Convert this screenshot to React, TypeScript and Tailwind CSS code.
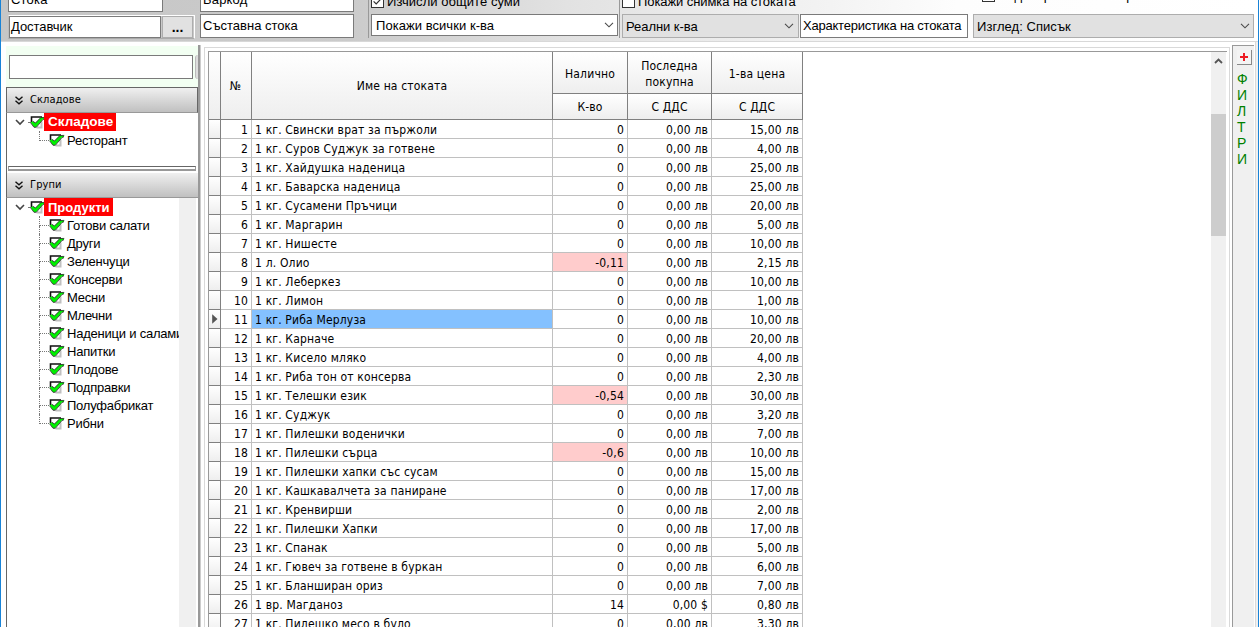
import type { ReactNode } from 'react';

type Row = [name: string, qty: string, last: string, price: string];

const rows: Row[] = [
  ['1 кг. Свински врат за пържоли', '0', '0,00 лв', '15,00 лв'],
  ['1 кг. Суров Суджук за готвене', '0', '0,00 лв', '4,00 лв'],
  ['1 кг. Хайдушка наденица', '0', '0,00 лв', '25,00 лв'],
  ['1 кг. Баварска наденица', '0', '0,00 лв', '25,00 лв'],
  ['1 кг. Сусамени Пръчици', '0', '0,00 лв', '20,00 лв'],
  ['1 кг. Маргарин', '0', '0,00 лв', '5,00 лв'],
  ['1 кг. Нишесте', '0', '0,00 лв', '10,00 лв'],
  ['1 л. Олио', '-0,11', '0,00 лв', '2,15 лв'],
  ['1 кг. Леберкез', '0', '0,00 лв', '10,00 лв'],
  ['1 кг. Лимон', '0', '0,00 лв', '1,00 лв'],
  ['1 кг. Риба Мерлуза', '0', '0,00 лв', '10,00 лв'],
  ['1 кг. Карначе', '0', '0,00 лв', '20,00 лв'],
  ['1 кг. Кисело мляко', '0', '0,00 лв', '4,00 лв'],
  ['1 кг. Риба тон от консерва', '0', '0,00 лв', '2,30 лв'],
  ['1 кг. Телешки език', '-0,54', '0,00 лв', '30,00 лв'],
  ['1 кг. Суджук', '0', '0,00 лв', '3,20 лв'],
  ['1 кг. Пилешки воденички', '0', '0,00 лв', '7,00 лв'],
  ['1 кг. Пилешки сърца', '-0,6', '0,00 лв', '10,00 лв'],
  ['1 кг. Пилешки хапки със сусам', '0', '0,00 лв', '15,00 лв'],
  ['1 кг. Кашкавалчета за паниране', '0', '0,00 лв', '17,00 лв'],
  ['1 кг. Кренвирши', '0', '0,00 лв', '2,00 лв'],
  ['1 кг. Пилешки Хапки', '0', '0,00 лв', '17,00 лв'],
  ['1 кг. Спанак', '0', '0,00 лв', '5,00 лв'],
  ['1 кг. Гювеч за готвене в буркан', '0', '0,00 лв', '6,00 лв'],
  ['1 кг. Бланширан ориз', '0', '0,00 лв', '7,00 лв'],
  ['1 вр. Магданоз', '14', '0,00 $', '0,80 лв'],
  ['1 кг. Пилешко месо в було', '0', '0,00 лв', '3,30 лв'],
];
const selected = 10;

const groups = [
  'Готови салати', 'Други', 'Зеленчуци', 'Консерви', 'Месни', 'Млечни',
  'Наденици и салами', 'Напитки', 'Плодове', 'Подправки', 'Полуфабрикат', 'Рибни',
];

const GRID = 'grid grid-cols-[12px_31px_301px_75px_84px_91px]';

function Chevron({ className = '' }: { className?: string }) {
  return (
    <svg width="10" height="6" viewBox="0 0 10 6" className={`shrink-0 ${className}`}>
      <path d="M1 0.8 L5 4.8 L9 0.8" fill="none" stroke="#4a4a4a" strokeWidth="1.1" />
    </svg>
  );
}

function Field({ className, children }: { className: string; children?: ReactNode }) {
  return (
    <div className={`flex shrink-0 items-center overflow-hidden whitespace-nowrap border border-[#7a7a7a] bg-white ${className}`}>
      {children}
    </div>
  );
}

function CheckBox({ checked = false }: { checked?: boolean }) {
  return (
    <svg width="13" height="13" viewBox="0 0 13 13" className="shrink-0">
      <rect x="0.5" y="0.5" width="12" height="12" fill="#fff" stroke="#333" />
      {checked && <path d="M2.6 6.4 L5.2 9 L10.4 3.4" fill="none" stroke="#333" strokeWidth="1.2" />}
    </svg>
  );
}

function TreeCheck() {
  return (
    <svg width="16" height="13" viewBox="0 0 16 13" className="shrink-0">
      <rect x="2" y="2" width="9" height="9" fill="#fff" />
      <path d="M6.5 11.5 H11.5 V5.5" fill="none" stroke="#c0c0c0" strokeWidth="2" />
      <path d="M1.5 6 V1 H12" fill="none" stroke="#111" strokeWidth="1.6" />
      <path d="M0.6 6.6 L2.8 5.2 L5.4 7 L10.8 1.6 L15.2 1.4 L15 2.7 L13 3.3 L6.2 11 L4 11 Z" fill="#00f000" />
      <path d="M2.8 5.2 L5.4 7 L10.8 1.6 L15.2 1.4 M15 2.7 L13 3.5 L6.3 11.3 L4 11.3 L0.6 6.8" fill="none" stroke="#222" strokeWidth="0.8" />
    </svg>
  );
}

function SectionHeader({ title, className }: { title: string; className: string }) {
  return (
    <div className={`flex shrink-0 items-center border-b border-l border-b-[#999] border-l-[#666] bg-linear-to-b from-[#f0f0f0] to-[#c0c0c0] pl-2 font-['DejaVu_Sans_Condensed',sans-serif] text-[11px] tracking-[0.1px] ${className}`}>
      <svg width="8" height="9" viewBox="0 0 8 9" className="mr-[7px]">
        <path d="M0.5 0.8 L4 3.8 L7.5 0.8 M0.5 4.8 L4 7.8 L7.5 4.8" fill="none" stroke="#111" strokeWidth="1.4" />
      </svg>
      <span className="pt-px">{title}</span>
    </div>
  );
}

function TreeRoot({ title, className }: { title: string; className: string }) {
  return (
    <div className="flex h-[18px] items-center pl-2">
      <svg width="10" height="7" viewBox="0 0 10 7" className="shrink-0">
        <path d="M1 1 L5 5 L9 1" fill="none" stroke="#444" strokeWidth="1.6" />
      </svg>
      <div className="ml-[3px] w-[2px] border-t border-dotted border-[#777]" />
      <TreeCheck />
      <div className={`-ml-[2px] flex h-[18px] items-center bg-[#f00] pl-1 pt-px font-bold text-white ${className}`}>{title}</div>
    </div>
  );
}

function TreeLeaf({ title, last }: { title: string; last: boolean }) {
  return (
    <div className="flex h-[18px] items-center overflow-hidden whitespace-nowrap pl-8">
      <div className="flex h-full w-[10px] shrink-0 flex-col">
        <div className="h-[10px] border-b border-l border-dotted border-[#777]" />
        {!last && <div className="h-2 border-l border-dotted border-[#777]" />}
      </div>
      <TreeCheck />
      <span className="ml-[2px] pt-[2px] tracking-[-0.22px]">{title}</span>
    </div>
  );
}

function Toolbar() {
  return (
    <div className="h-[42px] shrink-0 overflow-hidden border-b border-[#d8d8d8] bg-[linear-gradient(90deg,#c6c6c6_0%,#cbcbcb_28%,#e2e2e2_45%,#f3f3f3_66%,#fdfdfd_76%,#ffffff_100%)] pl-[7px]">
      <div className="flex h-[14px] overflow-hidden">
        <Field className="-mt-3 h-6 w-[155px] pl-[2px] tracking-[0.2px]">Стока</Field>
        <Field className="-mt-3 ml-[37px] h-6 w-[154px] pl-[2px] tracking-[0.2px]">Баркод</Field>
        <div className="ml-[14px] w-px bg-[#999]" />
        <div className="-mt-[5px] ml-[2px] flex h-[13px] w-[248px] items-center gap-[3px] whitespace-nowrap">
          <CheckBox checked />
          <span className="tracking-[0.05px]">Изчисли общите суми</span>
        </div>
        <div className="w-px bg-[#999]" />
        <div className="-mt-[5px] ml-[2px] flex h-[13px] w-[360px] items-center gap-[3px] whitespace-nowrap">
          <CheckBox />
          <span className="tracking-[-0.08px]">Покажи снимка на стоката</span>
        </div>
        <div className="-mt-[11px] flex h-[13px] items-center gap-[5px] whitespace-nowrap">
          <CheckBox />
          <span>Код на разликите по ръст</span>
        </div>
      </div>
      <div className="flex h-7 items-start">
        <div className="mt-px flex h-6 w-[187px] shrink-0 border border-r-white border-t-white border-b-[#aaa] border-l-[#bbb]">
          <Field className="h-[22px] w-[152px] pl-px tracking-[-0.05px]">Доставчик</Field>
          <div className="ml-px flex h-[22px] w-[31px] items-center justify-center border border-[#adadad] bg-[#e1e1e1] text-[14px] font-bold">...</div>
        </div>
        <Field className="ml-[5px] h-6 w-[154px] pl-[2px]">Съставна стока</Field>
        <div className="ml-[14px] h-[24px] w-px bg-[#999]" />
        <Field className="ml-[2px] h-[22px] w-[247px] justify-between pl-1 pr-[3px]">
          <span className="pt-[2px] tracking-[0.05px]">Покажи всички к-ва</span>
          <Chevron />
        </Field>
        <div className="ml-px h-[24px] w-px bg-[#999]" />
        <div className="ml-[2px] flex h-6 w-[177px] shrink-0 items-center justify-between border border-[#adadad] bg-[#e1e1e1] pl-[3px] pr-1">
          <span className="pt-[2px] tracking-[-0.05px]">Реални к-ва</span>
          <Chevron />
        </div>
        <Field className="ml-px h-6 w-[168px] pl-[2px] tracking-[-0.22px]">Характеристика на стоката</Field>
        <div className="ml-[5px] flex h-6 w-[281px] shrink-0 items-center justify-between border border-[#adadad] bg-[#e1e1e1] pl-[3px] pr-[3px]">
          <span className="pt-[2px] tracking-[0.05px]">Изглед: Списък</span>
          <Chevron />
        </div>
      </div>
    </div>
  );
}

function Sidebar() {
  return (
    <div className="ml-[5px] mt-1 flex w-[192px] shrink-0 flex-col">
      <div className="flex h-[41px] shrink-0 justify-between overflow-hidden bg-[#f2fff2] pl-[3px] pt-[9px]">
        <Field className="h-6 w-[184px]" />
        <div className="h-6 w-[3px] rounded-l border-l border-[#bbb] bg-[#ddd]" />
      </div>
      <SectionHeader title="Складове" className="h-[26px] border-r border-t border-r-[#666] border-t-[#666]" />
      <div className="h-[53px] shrink-0 border-l border-[#666] bg-white">
        <TreeRoot title="Складове" className="w-[72px] text-[13.5px]" />
        <TreeLeaf title="Ресторант" last />
      </div>
      <div className="h-[7px] shrink-0 border-l border-[#666] pl-px pr-[2px]">
        <div className="h-[5px] border border-t-[#666] border-l-[#999] border-r-[#999] border-b-2 border-b-[#999]" />
      </div>
      <SectionHeader title="Групи" className="h-[25px]" />
      <div className="flex min-h-0 flex-1 border-l border-[#666] bg-white">
        <div className="w-[172px] overflow-hidden">
          <TreeRoot title="Продукти" className="w-[69px] text-[13px]" />
          {groups.map((g, i) => (
            <TreeLeaf key={g} title={g} last={i === groups.length - 1} />
          ))}
        </div>
        <div className="w-[17px] bg-[#f0f0f0]" />
      </div>
    </div>
  );
}

function HeadCell({ className = '', children }: { className?: string; children?: ReactNode }) {
  return (
    <div className={`flex items-center justify-center border-b border-r border-[#808080] bg-linear-to-b from-white to-[#eeeeee] text-center leading-4 ${className}`}>
      {children}
    </div>
  );
}

function GoodsTable() {
  return (
    <div className="w-[594px] shrink-0 font-['DejaVu_Sans_Condensed',sans-serif] text-[12px] tracking-[0.17px]">
      <div className={`${GRID} grid-rows-[42px_26px]`}>
        <HeadCell className="row-span-2" />
        <HeadCell className="row-span-2 pr-px">№</HeadCell>
        <HeadCell className="row-span-2">Име на стоката</HeadCell>
        <HeadCell className="pt-[2px]">Налично</HeadCell>
        <HeadCell className="pt-[2px]">Последна<br />покупна</HeadCell>
        <HeadCell className="pt-[2px]">1-ва цена</HeadCell>
        <HeadCell>К-во</HeadCell>
        <HeadCell>С ДДС</HeadCell>
        <HeadCell>С ДДС</HeadCell>
      </div>
      {rows.map(([name, qty, last, price], i) => (
        <div key={name} className={`${GRID} h-[19px] whitespace-nowrap leading-5 *:h-[19px] *:border-b *:border-r *:border-[#c0c0c0]`}>
          <div className="flex items-center border-r-[#808080]! border-b-[#808080]! bg-linear-to-b from-white to-[#eeeeee] pl-[3px]">
            {i === selected && (
              <svg width="6" height="10" viewBox="0 0 6 10"><path d="M0.2 0.2 L5.5 5 L0.2 9.8 Z" fill="#555" /></svg>
            )}
          </div>
          <div className="pr-[3px] text-right">{i + 1}</div>
          <div className={`pl-[3px] ${i === selected ? 'bg-[#84c1ff]' : ''}`}>{name}</div>
          <div className={`pr-[3px] text-right ${qty.startsWith('-') ? 'bg-[#ffcccc]' : ''}`}>{qty}</div>
          <div className="pr-[3px] text-right">{last}</div>
          <div className="pr-[3px] text-right">{price}</div>
        </div>
      ))}
    </div>
  );
}

function FilterStrip() {
  return (
    <div className="ml-[2px] mt-[3px] flex w-[22px] shrink-0 flex-col border-l border-t border-[#999] bg-[#f0f0f0] pl-1 pt-1 text-[14px] leading-4 text-[#008000]">
      <div className="mb-[6px] flex h-[15px] w-[15px] items-center justify-center border-b border-r border-[#888] bg-[#f4f4f4]">
        <svg width="8" height="8" viewBox="0 0 8 8"><path d="M4 0 V8 M0 4 H8" stroke="#ed1c24" strokeWidth="2" shapeRendering="crispEdges" /></svg>
      </div>
      {[...'ФИЛТРИ'].map((c, i) => (
        <span key={i}>{c}</span>
      ))}
    </div>
  );
}

export default function App() {
  return (
    <div className="flex h-[627px] w-[1259px] flex-col overflow-hidden border-x border-[#1883d7] bg-white font-['Liberation_Sans',sans-serif] text-[13px] text-black">
      <Toolbar />
      <div className="flex min-h-0 flex-1">
        <Sidebar />
        <div className="mt-[3px] w-[3px] shrink-0 border-r border-[#ccc] bg-[#999]" />
        <div className="ml-[3px] mt-[5px] flex w-[1026px] shrink-0 border-l border-r border-t border-[#d9d9d9] pl-[3px] pr-[2px] pt-[3px]">
          <div className="flex min-w-0 flex-1 justify-between overflow-hidden border-l border-t border-[#999]">
            <GoodsTable />
            <div className="mr-px flex w-[15px] flex-col items-center bg-[#f0f0f0]">
              <svg width="9" height="6" viewBox="0 0 9 6" className="mt-[6px] shrink-0">
                <path d="M1 5 L4.5 1.5 L8 5" fill="none" stroke="#555" strokeWidth="1.8" />
              </svg>
              <div className="mt-[50px] h-[122px] w-full shrink-0 bg-[#cdcdcd]" />
            </div>
          </div>
        </div>
        <FilterStrip />
        <div className="ml-px w-px bg-[#d9d9d9]" />
        <div className="flex-1 bg-[#f0f0f0]" />
      </div>
    </div>
  );
}
